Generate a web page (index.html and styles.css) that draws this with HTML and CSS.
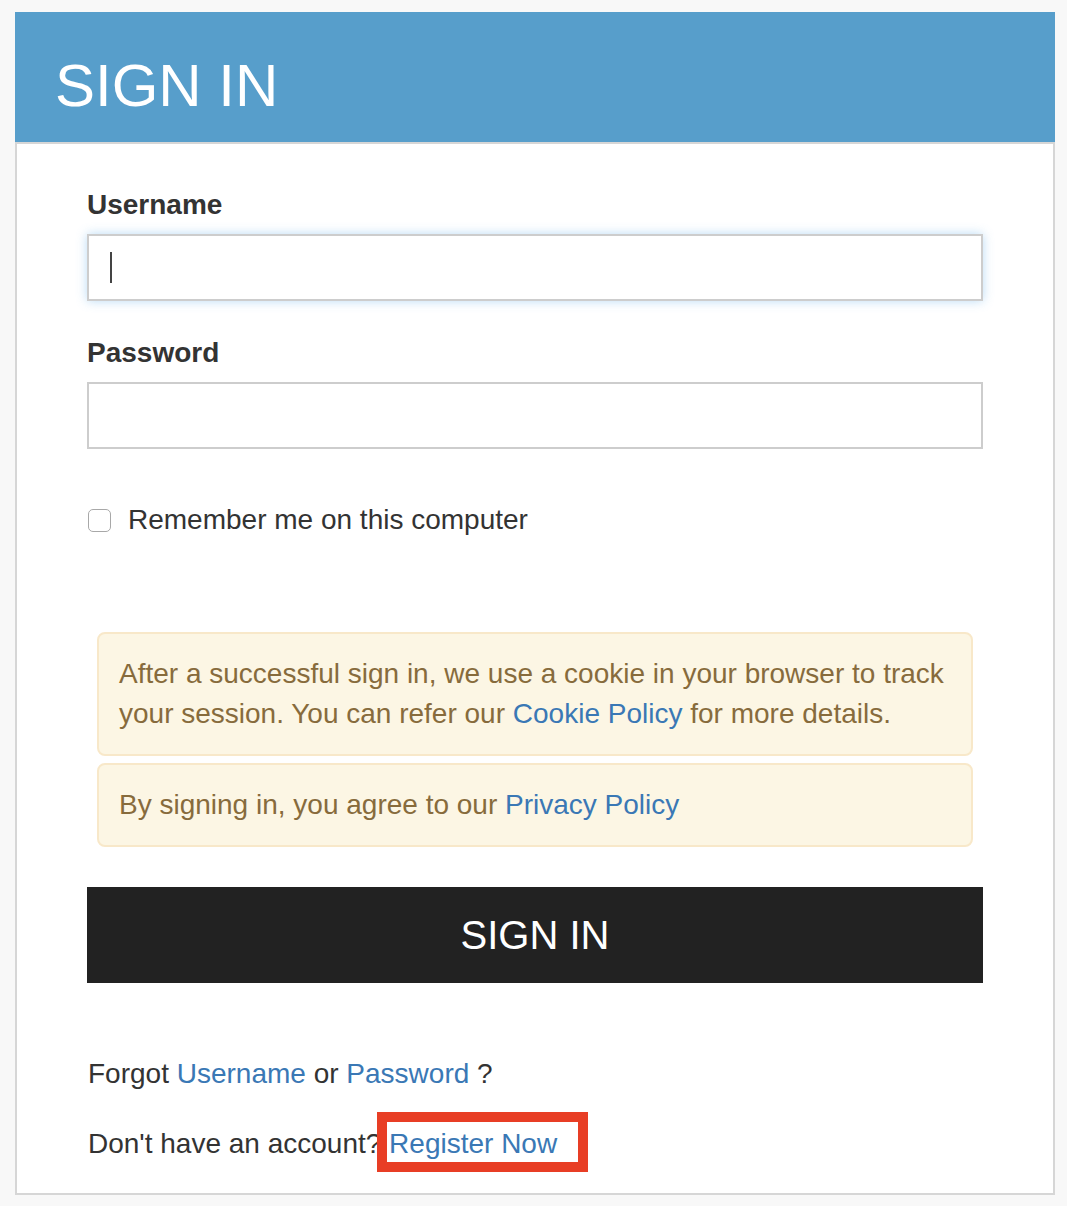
FILE: index.html
```html
<!DOCTYPE html>
<html lang="en">
<head>
<meta charset="utf-8">
<title>Sign In</title>
<link rel="stylesheet" href="styles.css">
</head>
<body>
<div class="card">
  <div class="card-header"><h1 class="card-title">SIGN IN</h1></div>
  <div class="card-body">
    <div class="form-group">
      <label class="field-label">Username</label>
      <div class="field field-focus"><span class="caret"></span></div>
    </div>
    <div class="form-group">
      <label class="field-label">Password</label>
      <div class="field"></div>
    </div>
    <div class="check-row">
      <span class="check-box"></span>
      <span class="check-text">Remember me on this computer</span>
    </div>
    <div class="alert alert-first">After a successful sign in, we use a cookie in your browser to track your session. You can refer our <a class="link" href="#">Cookie Policy</a> for more details.</div>
    <div class="alert">By signing in, you agree to our <a class="link" href="#">Privacy Policy</a></div>
    <button class="btn-signin" type="button">SIGN IN</button>
    <p class="help-line">Forgot <a class="link" href="#">Username</a> or <a class="link" href="#">Password</a> ?</p>
    <p class="help-line help-second">Don't have an account? <a class="link register" href="#">Register Now</a></p>
  </div>
</div>
</body>
</html>
```
FILE: styles.css
```css
html, body {
  margin: 0;
  padding: 0;
  background: #f8f8f8;
}
body {
  font-family: "Liberation Sans", Arial, sans-serif;
  color: #333;
  font-size: 28px;
  line-height: 40px;
}
.card {
  width: 1040px;
  margin: 12px 12px 0 15px;
}
.card-header {
  background: #579ecb;
  height: 130px;
  display: flex;
  align-items: center;
  padding-left: 40px;
}
.card-title {
  margin: 0;
  color: #fff;
  font-weight: normal;
  font-size: 60px;
  line-height: 60px;
  padding-top: 17px;
}
.card-body {
  background: #fff;
  border: 2px solid #d6d6d6;
  padding: 41px 70px 29px 70px;
}
.form-group {
  margin-bottom: 32px;
}
.field-label {
  display: block;
  font-weight: bold;
  margin-bottom: 9px;
}
.field {
  height: 63px;
  border: 2px solid #cdcdcd;
  background: #fff;
  display: flex;
  align-items: center;
  padding-left: 21px;
}
.field-focus {
  box-shadow: 0 0 10px rgba(102, 175, 233, 0.45);
}
.caret {
  width: 2px;
  height: 31px;
  background: #444;
}
.check-row {
  display: flex;
  align-items: center;
  margin-top: 51px;
  height: 40px;
}
.check-box {
  width: 21px;
  height: 21px;
  border: 1.5px solid #a8a8a8;
  border-radius: 5px;
  background: #fff;
  margin-left: 1px;
  margin-right: 17px;
}
.alert {
  margin: 0 10px;
  background: #fcf6e4;
  border: 2px solid #f8e8c9;
  border-radius: 8px;
  color: #876b3c;
  padding: 20px;
  line-height: 40px;
}
.alert-first {
  margin-top: 92px;
  margin-bottom: 7px;
}
.link {
  color: #3a78b5;
  text-decoration: none;
}
.btn-signin {
  display: block;
  width: 100%;
  height: 96px;
  margin-top: 40px;
  border: 0;
  background: #222;
  color: #fff;
  font-family: "Liberation Sans", Arial, sans-serif;
  font-size: 40px;
  padding: 0;
}
.help-line {
  margin: 71px 0 0 1px;
}
.help-second {
  margin-top: 30px;
}
.register {
  position: relative;
}
.register::after {
  content: "";
  position: absolute;
  left: -12px;
  top: -16px;
  width: 191px;
  height: 40px;
  border: 10px solid #e83e25;
}
```
